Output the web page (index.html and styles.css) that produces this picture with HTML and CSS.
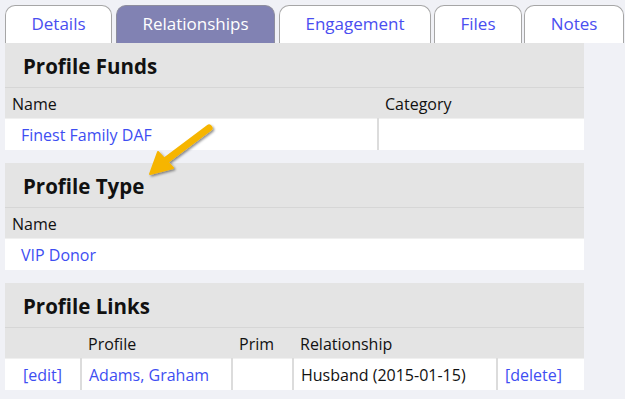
FILE: index.html
```html
<!DOCTYPE html>
<html>
<head>
<meta charset="utf-8">
<link rel="stylesheet" href="styles.css">
</head>
<body>
<div class="page">
  <nav class="tabs">
    <a class="tab tab-details">Details</a>
    <a class="tab tab-rel active">Relationships</a>
    <a class="tab tab-eng">Engagement</a>
    <a class="tab tab-files">Files</a>
    <a class="tab tab-notes">Notes</a>
  </nav>
  <div class="panel">
    <section class="block">
      <h2 class="block-title">Profile Funds</h2>
      <table class="grid">
        <thead><tr><th class="c-name">Name</th><th>Category</th></tr></thead>
        <tbody><tr><td class="c-name first"><a>Finest Family DAF</a></td><td></td></tr></tbody>
      </table>
    </section>
    <section class="block">
      <h2 class="block-title">Profile Type</h2>
      <table class="grid">
        <thead><tr><th>Name</th></tr></thead>
        <tbody><tr><td class="first"><a>VIP Donor</a></td></tr></tbody>
      </table>
    </section>
    <section class="block">
      <h2 class="block-title">Profile Links</h2>
      <table class="grid">
        <thead><tr><th class="l1"></th><th class="l2">Profile</th><th class="l3">Prim</th><th class="l4">Relationship</th><th></th></tr></thead>
        <tbody><tr><td class="l1 center"><a>[edit]</a></td><td class="l2"><a>Adams, Graham</a></td><td class="l3"></td><td class="l4">Husband (2015-01-15)</td><td><a>[delete]</a></td></tr></tbody>
      </table>
    </section>
  </div>
  <svg class="arrow" width="80" height="64" viewBox="0 0 80 64">
    <defs>
      <filter id="sh" x="-20%" y="-20%" width="140%" height="140%">
        <feDropShadow dx="1.5" dy="1.5" stdDeviation="1.2" flood-color="#000" flood-opacity="0.45"/>
      </filter>
    </defs>
    <g filter="url(#sh)">
      <line x1="64" y1="11" x2="20" y2="44" stroke="#f6b500" stroke-width="7" stroke-linecap="round"/>
      <polygon points="5,57 13,35 28,51" fill="#f6b500" stroke="#f6b500" stroke-width="2" stroke-linejoin="round"/>
    </g>
  </svg>
</div>
</body>
</html>
```
FILE: styles.css
```css
html, body {
  margin: 0;
  padding: 0;
  background: #f0f1f6;
}
body {
  font-family: "Open Sans", "Noto Sans", sans-serif;
  color: #111;
}
.page {
  position: relative;
  padding: 5px;
  width: 579px;
}
.tabs {
  display: flex;
  gap: 4px;
  height: 38px;
  width: 620px;
}
.tab {
  box-sizing: border-box;
  display: flex;
  align-items: center;
  justify-content: center;
  height: 38px;
  padding-bottom: 3px;
  border: 1px solid #a6a6a6;
  border-bottom: none;
  border-radius: 10px 10px 0 0;
  background: #fff;
  color: #4a4ef0;
  font-size: 17px;
}
.tab.active {
  background: #8182b3;
  color: #fff;
  border-color: #8e8e9e;
}
.tab-details { width: 107px; }
.tab-rel { width: 159px; }
.tab-eng { width: 152px; }
.tab-files { width: 88px; margin-left: -1px; }
.tab-notes { width: 100px; margin-left: -2px; }

.panel {
  display: flex;
  flex-direction: column;
  gap: 13px;
}
.block {
  background: #e4e4e4;
}
.block-title {
  margin: 0;
  height: 45px;
  line-height: 46px;
  padding-left: 18px;
  font-size: 20.5px;
  font-weight: 700;
  border-bottom: 1px solid #d6d6d6;
  box-sizing: border-box;
}
.grid {
  width: 100%;
  border-collapse: collapse;
  font-size: 16px;
}
.grid th {
  box-sizing: border-box;
  height: 30px;
  text-align: left;
  font-weight: 400;
  padding: 2px 7px 0;
  border-bottom: 1px solid #f0f0f0;
}
.grid td {
  box-sizing: border-box;
  height: 32px;
  background: #fff;
  padding: 1px 7px 0;
  border-left: 2px solid #dcdcdc;
}
.grid td:first-child { border-left: none; }
.grid td.first { padding-left: 16px; }
.grid td.center { text-align: center; }
.grid a { color: #3e4ef2; }
.c-name { width: 373px; }
.l1 { width: 76px; }
.l2 { width: 151px; }
.l3 { width: 61px; }
.l4 { width: 204px; }
.arrow {
  position: absolute;
  left: 145px;
  top: 117px;
}
```
